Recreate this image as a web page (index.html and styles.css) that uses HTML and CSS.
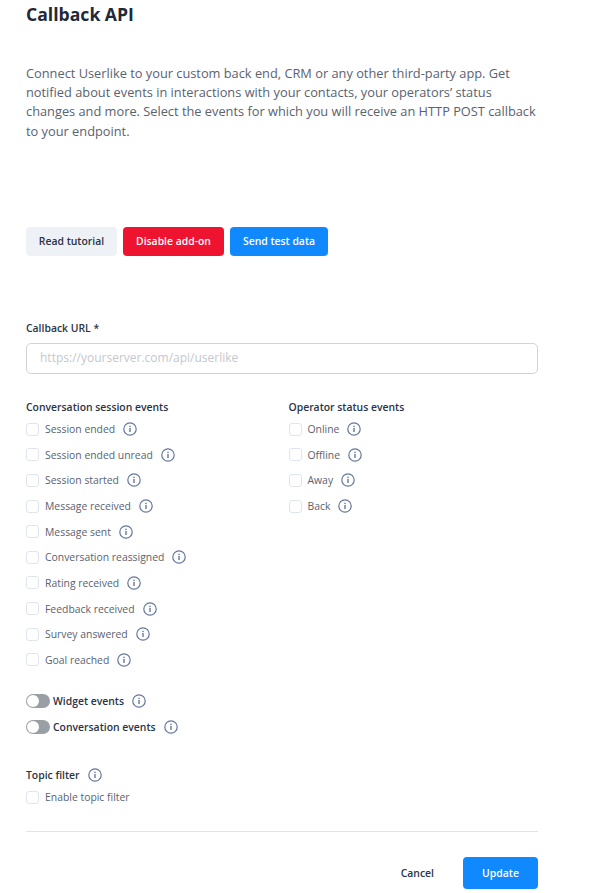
FILE: index.html
```html
<!DOCTYPE html>
<html lang="en">
<head>
<meta charset="utf-8">
<title>Callback API</title>
<link rel="stylesheet" href="styles.css">
</head>
<body>
<svg class="defs" width="0" height="0" aria-hidden="true"><symbol id="info" viewBox="0 0 14 14"><circle cx="7" cy="7" r="6.2" fill="none" stroke="#64789b" stroke-width="1.2"/><rect x="6.3" y="6" width="1.4" height="4" fill="#64789b"/><rect x="6.3" y="3.7" width="1.4" height="1.4" fill="#64789b"/></symbol></svg>
<main class="page">
  <h1 class="title">Callback API</h1>
  <p class="intro">Connect Userlike to your custom back end, CRM or any other third-party app. Get notified about events in interactions with your contacts, your operators’ status changes and more. Select the events for which you will receive an HTTP POST callback to your endpoint.</p>
  <div class="actions">
    <button class="btn btn-light">Read tutorial</button>
    <button class="btn btn-red">Disable add-on</button>
    <button class="btn btn-blue">Send test data</button>
  </div>
  <label class="field-label">Callback URL *</label>
  <div class="input">https://yourserver.com/api/userlike</div>
  <div class="columns">
    <section class="col">
      <h2 class="group">Conversation session events</h2>
      <div class="check"><span class="box"></span><span>Session ended</span><svg class="i"><use href="#info"/></svg></div>
      <div class="check"><span class="box"></span><span>Session ended unread</span><svg class="i"><use href="#info"/></svg></div>
      <div class="check"><span class="box"></span><span>Session started</span><svg class="i"><use href="#info"/></svg></div>
      <div class="check"><span class="box"></span><span>Message received</span><svg class="i"><use href="#info"/></svg></div>
      <div class="check"><span class="box"></span><span>Message sent</span><svg class="i"><use href="#info"/></svg></div>
      <div class="check"><span class="box"></span><span>Conversation reassigned</span><svg class="i"><use href="#info"/></svg></div>
      <div class="check"><span class="box"></span><span>Rating received</span><svg class="i"><use href="#info"/></svg></div>
      <div class="check"><span class="box"></span><span>Feedback received</span><svg class="i"><use href="#info"/></svg></div>
      <div class="check"><span class="box"></span><span>Survey answered</span><svg class="i"><use href="#info"/></svg></div>
      <div class="check"><span class="box"></span><span>Goal reached</span><svg class="i"><use href="#info"/></svg></div>
    </section>
    <section class="col">
      <h2 class="group">Operator status events</h2>
      <div class="check"><span class="box"></span><span>Online</span><svg class="i"><use href="#info"/></svg></div>
      <div class="check"><span class="box"></span><span>Offline</span><svg class="i"><use href="#info"/></svg></div>
      <div class="check"><span class="box"></span><span>Away</span><svg class="i"><use href="#info"/></svg></div>
      <div class="check"><span class="box"></span><span>Back</span><svg class="i"><use href="#info"/></svg></div>
    </section>
  </div>
  <div class="toggles">
    <div class="toggle-row"><span class="switch"></span><span class="toggle-label">Widget events</span><svg class="i"><use href="#info"/></svg></div>
    <div class="toggle-row"><span class="switch"></span><span class="toggle-label">Conversation events</span><svg class="i"><use href="#info"/></svg></div>
  </div>
  <div class="topic-head"><span class="topic-label">Topic filter</span><svg class="i"><use href="#info"/></svg></div>
  <div class="check"><span class="box"></span><span>Enable topic filter</span></div>
  <hr class="rule">
  <div class="footer">
    <button class="btn-plain">Cancel</button>
    <button class="btn btn-blue btn-update">Update</button>
  </div>
</main>
</body>
</html>
```

FILE: styles.css
```css
* { box-sizing: border-box; }
html, body { margin: 0; padding: 0; background: #fff; }
body { font-family: "Open Sans", "Noto Sans", sans-serif; color: #4a5263; height: 893px; overflow: hidden; }
.defs { position: absolute; }
.page { width: 512px; margin-left: 26px; display: flex; flex-direction: column; align-items: stretch; }
.title { margin: 2px 0 0; font-size: 17.6px; line-height: 24px; font-weight: 700; color: #1f2937; }
.intro { margin: 38px 0 0; font-size: 12.8px; line-height: 19.2px; color: #5a6270; }
.actions { margin-top: 86px; display: flex; gap: 6px; }
.btn { height: 29px; border: 0; border-radius: 4px; padding: 0; font: 600 10.4px "Open Sans", sans-serif; }
.btn-light { width: 91px; background: #eef2f6; color: #2a3344; }
.btn-red { width: 101px; background: #ee132f; color: #fff; }
.btn-blue { width: 98px; background: #1089ff; color: #fff; }
.field-label { display: block; margin-top: 60px; font-size: 10.4px; line-height: 24px; font-weight: 600; color: #2a3344; }
.input { margin-top: 3px; height: 31px; border: 1px solid #d0d3d8; border-radius: 5px; padding: 0 13px; font-size: 12px; line-height: 28px; color: #c4c7cd; }
.columns { display: flex; margin-top: 25px; }
.col { flex: none; width: 262.5px; }
.group { margin: 0 0 1.4px; font-size: 10.4px; line-height: 16px; font-weight: 600; color: #2a3344; }
.check { display: flex; align-items: center; height: 25.67px; font-size: 10.4px; color: #5a6270; }
.box { width: 13px; height: 13px; margin: 0 6px 0 0; border: 1px solid #dfe5ee; border-radius: 3px; background: #fff; }
.i { width: 14px; height: 14px; margin-left: 8px; }
.toggles { margin-top: 15.6px; display: flex; flex-direction: column; }
.toggle-row { display: flex; align-items: center; height: 26px; }
.switch { position: relative; width: 24px; height: 14px; border-radius: 7px; background: #9a9ea5; margin-right: 3px; }
.switch::after { content: ""; position: absolute; left: 1px; top: 1px; width: 12px; height: 12px; border-radius: 50%; background: #fff; }
.toggle-label, .topic-label { font-size: 10.4px; font-weight: 600; color: #2a3344; }
.topic-head { display: flex; align-items: center; margin-top: 27px; height: 16px; }
.page > .check { height: 26px; margin-top: 1px; }
.rule { margin: 21px 0 0; border: 0; border-top: 1px solid #e2e3e5; width: 100%; }
.footer { display: flex; justify-content: flex-end; align-items: center; gap: 29px; margin-top: 25px; }
.btn-plain { border: 0; background: none; padding: 0; font: 600 10.4px "Open Sans", sans-serif; color: #2a3344; }
.btn-update { width: 75px; height: 32px; }
```
